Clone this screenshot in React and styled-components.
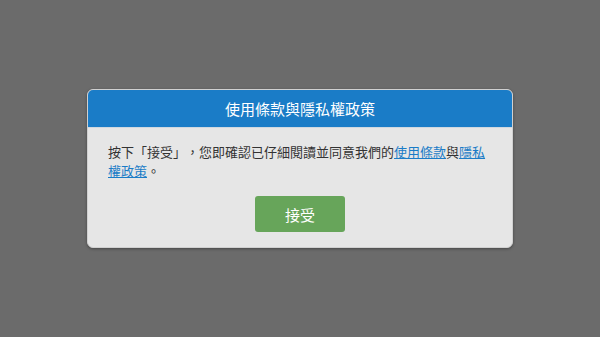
import React from "react";
import styled, { createGlobalStyle } from "styled-components";

const Global = createGlobalStyle`
  html, body { margin: 0; padding: 0; height: 100%; }
  body {
    background: #6b6b6b;
    font-family: "Noto Sans CJK TC", "Noto Sans", sans-serif;
  }
  #root { height: 100%; }
`;

const Overlay = styled.div`
  width: 600px;
  height: 337px;
  display: flex;
  align-items: center;
  justify-content: center;
  background: #6b6b6b;
`;

const Dialog = styled.div`
  width: 426px;
  box-sizing: border-box;
  background: #e6e6e6;
  border: 1px solid #d0d0d0;
  border-radius: 6px;
  overflow: hidden;
  box-shadow: 0 1px 3px rgba(0, 0, 0, 0.35);
  display: flex;
  flex-direction: column;
`;

const Header = styled.div`
  height: 37px;
  flex: none;
  background: #1a7cc7;
  border-bottom: 1px solid #cfd8e0;
  color: #fff;
  font-size: 15px;
  display: flex;
  align-items: center;
  justify-content: center;
`;

const Body = styled.div`
  padding: 14px 20px 15px 20px;
  display: flex;
  flex-direction: column;
  align-items: center;
`;

const Message = styled.p`
  margin: 0;
  align-self: stretch;
  font-size: 13px;
  line-height: 19px;
  color: #333;
  text-spacing-trim: space-all;
`;

const Link = styled.a`
  color: #1a7cc7;
  text-decoration: underline;
`;

const AcceptButton = styled.button`
  margin-top: 16px;
  width: 90px;
  height: 36px;
  border: none;
  border-radius: 3px;
  background: #67a55a;
  color: #fff;
  font-family: inherit;
  font-size: 15px;
  cursor: pointer;
`;

export default function App() {
  return (
    <>
      <Global />
      <Overlay>
        <Dialog>
          <Header>使用條款與隱私權政策</Header>
          <Body>
            <Message>
              按下「接受」，您即確認已仔細閱讀並同意我們的<Link href="#">使用條款</Link>與<Link href="#">隱私權政策</Link>。
            </Message>
            <AcceptButton>接受</AcceptButton>
          </Body>
        </Dialog>
      </Overlay>
    </>
  );
}
